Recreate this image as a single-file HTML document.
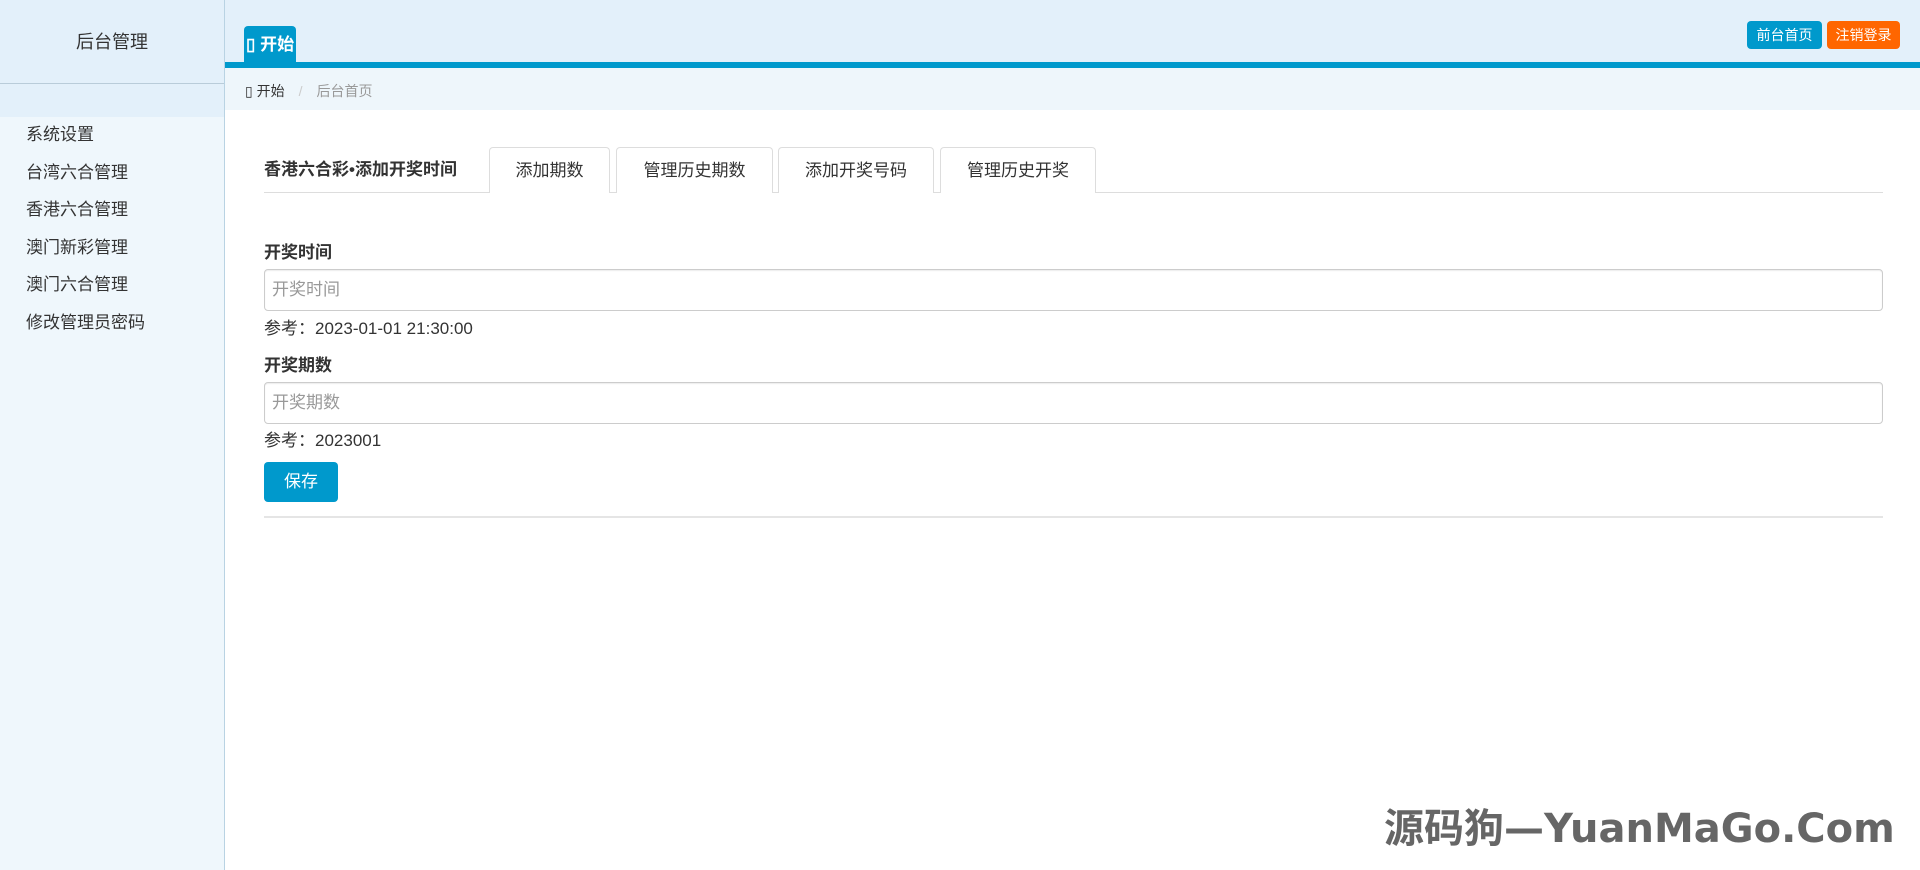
<!DOCTYPE html>
<html><head><meta charset="utf-8"><style>
*{margin:0;padding:0;box-sizing:border-box}
body{width:1920px;height:870px;overflow:hidden;background:#fff;font-family:"Liberation Sans","Noto Sans CJK SC",sans-serif;color:#333;position:relative}
.side{position:absolute;left:0;top:0;width:225px;height:870px;background:#eff7fc;border-right:1px solid #b9d3e3}
.sidehead{height:84px;background:#e3f0fa;border-bottom:1px solid #b9ccd9;text-align:center;line-height:84px;font-size:18px;color:#333}
.siderow{height:33px;background:#e3f0fa}
.menu div{position:absolute;left:26px;font-size:17px;color:#333}
.top{position:absolute;left:225px;top:0;right:0;height:62px;background:#e3f0fa}
.bar{position:absolute;left:225px;top:62px;right:0;height:6px;background:#0099cc}
.tab0{position:absolute;left:244px;top:26px;width:52px;height:37px;background:#0099cc;border-radius:4px 4px 0 0;color:#fff;font-weight:bold;font-size:17px;line-height:38px;padding-left:2px;white-space:nowrap;overflow:hidden}
.bc{position:absolute;left:225px;top:68px;right:0;height:42px;background:#eef6fb;font-size:14px;line-height:46px;padding-left:20px}
.btn{position:absolute;top:21px;height:28px;border-radius:4px;color:#fff;font-size:14px;line-height:28px;text-align:center}
.tabs{position:absolute;left:264px;top:147px;width:1619px;height:46px;border-bottom:1px solid #ddd}
.t{position:absolute;top:0;height:46px;border:1px solid #ddd;border-bottom:none;border-radius:4px 4px 0 0;background:#fff;font-size:17px;line-height:46px;text-align:center;color:#333}
.lbl{position:absolute;left:264px;font-weight:bold;font-size:17px;color:#333}
.inp{position:absolute;left:264px;width:1619px;height:42px;border:1px solid #ccc;border-radius:4px;font-size:17px;color:#999;line-height:40px;padding-left:7px;box-shadow:inset 0 1px 1px rgba(0,0,0,.075)}
.ref{position:absolute;left:264px;font-size:17px;color:#333}
</style></head><body>
<div class="side"><div class="sidehead">后台管理</div><div class="siderow"></div></div>
<div class="menu">
<div style="top:120px">系统设置</div>
<div style="top:158px">台湾六合管理</div>
<div style="top:195px">香港六合管理</div>
<div style="top:233px">澳门新彩管理</div>
<div style="top:270px">澳门六合管理</div>
<div style="top:308px">修改管理员密码</div>
</div>
<div class="top"></div>
<div class="bar"></div>
<div class="tab0">▯ 开始</div>
<div class="btn" style="left:1747px;width:75px;background:#0099cc">前台首页</div>
<div class="btn" style="left:1827px;width:73px;background:#ff6600">注销登录</div>
<div class="bc"><span style="color:#333">▯ 开始</span><span style="color:#ccc;padding:0 14px">/</span><span style="color:#999">后台首页</span></div>
<div class="tabs">
<div style="position:absolute;left:0;top:0;line-height:46px;font-weight:bold;font-size:17px;color:#333">香港六合彩•添加开奖时间</div>
<div class="t" style="left:225px;width:121px">添加期数</div>
<div class="t" style="left:352px;width:157px">管理历史期数</div>
<div class="t" style="left:514px;width:156px">添加开奖号码</div>
<div class="t" style="left:676px;width:156px">管理历史开奖</div>
</div>
<div class="lbl" style="top:238px">开奖时间</div>
<div class="inp" style="top:269px">开奖时间</div>
<div class="ref" style="top:314px">参考：2023-01-01 21:30:00</div>
<div class="lbl" style="top:351px">开奖期数</div>
<div class="inp" style="top:382px">开奖期数</div>
<div class="ref" style="top:426px">参考：2023001</div>
<div style="position:absolute;left:264px;top:462px;width:74px;height:40px;background:#0099cc;border-radius:4px;color:#fff;font-size:17px;line-height:40px;text-align:center">保存</div>
<div style="position:absolute;left:264px;top:516px;width:1619px;height:2px;background:#e5e5e5"></div>
<div style="position:absolute;left:1384px;top:796px;font-family:'DejaVu Sans','Noto Sans CJK SC',sans-serif;font-weight:bold;font-size:40px;color:#666;white-space:nowrap">源码狗—YuanMaGo.Com</div>
</body></html>
